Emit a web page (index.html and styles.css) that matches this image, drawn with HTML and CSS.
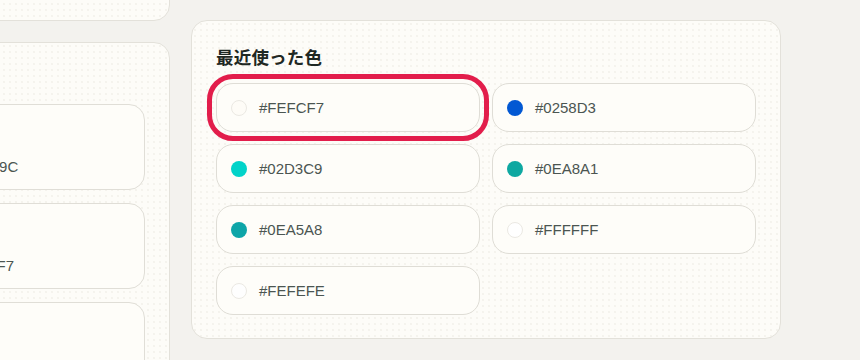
FILE: index.html
```html
<!DOCTYPE html>
<html lang="ja">
<head>
<meta charset="utf-8">
<title>最近使った色</title>
<link rel="stylesheet" href="styles.css">
</head>
<body>
<div class="page">
  <div class="left-col">
    <div class="card card-top"></div>
    <div class="card card-list">
      <div class="swatch-item"><span class="hex hex-a">#0EA59C</span></div>
      <div class="swatch-item"><span class="hex hex-b">#FEFCF7</span></div>
      <div class="swatch-item"><span class="hex hex-c">#FEFEFE</span></div>
    </div>
  </div>
  <section class="card recent">
    <h2 class="recent-title">最近使った色</h2>
    <div class="recent-grid">
      <button class="chip selected"><span class="dot dot-light" style="background:#FEFCF7"></span><span class="chip-label">#FEFCF7</span></button>
      <button class="chip"><span class="dot" style="background:#0258D3"></span><span class="chip-label">#0258D3</span></button>
      <button class="chip"><span class="dot" style="background:#02D3C9"></span><span class="chip-label">#02D3C9</span></button>
      <button class="chip"><span class="dot" style="background:#0EA8A1"></span><span class="chip-label">#0EA8A1</span></button>
      <button class="chip"><span class="dot" style="background:#0EA5A8"></span><span class="chip-label">#0EA5A8</span></button>
      <button class="chip"><span class="dot dot-light" style="background:#FFFFFF"></span><span class="chip-label">#FFFFFF</span></button>
      <button class="chip"><span class="dot dot-light" style="background:#FEFEFE"></span><span class="chip-label">#FEFEFE</span></button>
    </div>
  </section>
</div>
</body>
</html>
```
FILE: styles.css
```css
* { box-sizing: border-box; }
html, body { margin: 0; padding: 0; }
body {
  background: #f3f2ee;
  width: 860px;
  height: 360px;
  overflow: hidden;
  font-family: "Liberation Sans", "Noto Sans CJK JP", sans-serif;
}
.page {
  display: flex;
  align-items: flex-start;
  margin-left: -150px;
}
.card {
  background-color: #fdfcf8;
  background-image: radial-gradient(rgba(120, 110, 80, 0.06) 0.7px, transparent 1px);
  background-size: 6px 6px;
  border: 1px solid #e3e1da;
  border-radius: 16px;
}
.left-col {
  width: 320px;
  display: flex;
  flex-direction: column;
  gap: 21px;
  margin-top: -60px;
}
.card-top { height: 81px; }
.card-list {
  height: 400px;
  padding: 61px 24px 0 60px;
  display: flex;
  flex-direction: column;
  gap: 13px;
}
.swatch-item {
  height: 86px;
  flex: none;
  border: 1px solid #e0ded7;
  border-radius: 16px;
  background: #fefdf9;
  display: flex;
  align-items: flex-end;
  padding: 0 0 12px 0;
}
.hex {
  font-size: 15px;
  color: #4b5551;
  line-height: 20px;
  white-space: nowrap;
}
.hex-a { margin-left: 42px; }
.hex-b { margin-left: 37px; }
.hex-c { margin-left: 40px; }
.recent {
  margin-left: 21px;
  margin-top: 20px;
  width: 590px;
  height: 319px;
  padding: 24px 24px 22px 24px;
}
.recent-title {
  margin: 0 0 14px 0;
  font-family: "Noto Sans CJK JP", sans-serif;
  font-size: 17.5px;
  font-weight: 700;
  line-height: 24px;
  color: #1f2823;
  letter-spacing: 0.2px;
}
.recent-grid {
  display: grid;
  grid-template-columns: 264px 264px;
  column-gap: 12px;
  row-gap: 12px;
}
.chip {
  height: 49px;
  border: 1px solid #dfddd6;
  border-radius: 17px;
  background: #fefdf9;
  display: flex;
  align-items: center;
  gap: 12px;
  padding: 0 0 0 14px;
  font-family: inherit;
  cursor: pointer;
}
.chip.selected {
  outline: 5px solid #e21d4b;
  outline-offset: 4px;
}
.dot {
  width: 16px;
  height: 16px;
  border-radius: 50%;
  flex: none;
}
.dot-light { border: 1px solid #ebe9e3; }
.chip-label {
  font-size: 15px;
  color: #4b5551;
  line-height: 20px;
}
```
